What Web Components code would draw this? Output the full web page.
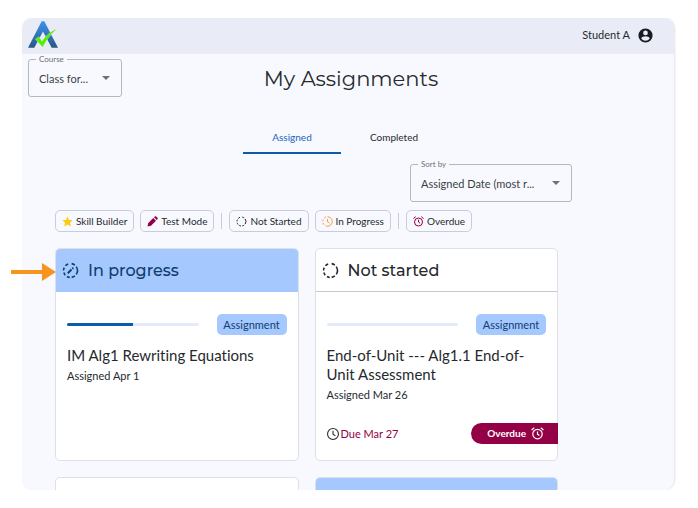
<!DOCTYPE html>
<html lang="en">
<head>
<meta charset="utf-8">
<meta name="viewport" content="width=device-width, initial-scale=1">
<title>My Assignments</title>
<style>
    html, body {
        height: 100%;
    }
    body {
        box-sizing: border-box;
        margin: 0;
        padding: 18px 24px 18px 22px;
        background: #fff;
        color: #262a2e;
        font-family: Lato, "Open Sans", sans-serif;
        font-variant-ligatures: none;
        --heading-font: Montserrat, Inter, "Open Sans", sans-serif;
        --blue: #0b5cab;
        --navy: #0f3e70;
        --sky: #a5c8ff;
        --berry: #930046;
        --line: #c9ccdc;
    }
</style>
</head>
<body>
<app-shell user="Student A">
    <page-heading>
        <outlined-select slot="start" label="Course" value="Class for..."></outlined-select>
        My Assignments
    </page-heading>
    <tab-bar tabs="Assigned,Completed"></tab-bar>
    <sort-row>
        <outlined-select label="Sort by" value="Assigned Date (most r..."></outlined-select>
    </sort-row>
    <filter-bar>
        <filter-chip icon="star">Skill Builder</filter-chip>
        <filter-chip icon="pencil">Test Mode</filter-chip>
        <hr>
        <filter-chip icon="dashed">Not Started</filter-chip>
        <filter-chip icon="clock-dashed">In Progress</filter-chip>
        <hr>
        <filter-chip icon="alarm">Overdue</filter-chip>
    </filter-bar>
    <card-grid>
        <assignment-card status="In progress" icon="progress" active pointer percent="50" kind="Assignment">
            IM Alg1 Rewriting Equations
            <span slot="assigned">Assigned Apr 1</span>
        </assignment-card>
        <assignment-card status="Not started" icon="dashed" percent="0" kind="Assignment" due="Due Mar 27" overdue>
            End-of-Unit --- Alg1.1 End-of-Unit Assessment
            <span slot="assigned">Assigned Mar 26</span>
        </assignment-card>
        <assignment-card></assignment-card>
        <assignment-card active></assignment-card>
    </card-grid>
</app-shell>

<script>
const DASHES = 'M9 3.500a9 9 0 0 0-3.600 2.400M3.900 8.200A9 9 0 0 0 3 12M3.400 14.600a9 9 0 0 0 1.800 3.400M7.500 19.800A9 9 0 0 0 11 21M13.500 20.900A9 9 0 0 0 17.600 19M19.400 17A9 9 0 0 0 19.400 7M17.600 5A9 9 0 0 0 13.500 3.100';
const ALARM = '<circle cx="12" cy="13" r="8"/><path d="M12 8.500V13l3.200 2.400M2 6l4.500-3.700M22 6l-4.500-3.700"/>';

const ICONS = {
    star: '<path fill="#ffc814" stroke="none" d="M12 2l3 6.800 7.500.7-5.700 5 1.700 7.300-6.500-3.900-6.500 3.900 1.700-7.300-5.700-5L9 8.800z"/>',
    pencil: '<path fill="#930046" stroke="none" d="M2 22l1.500-7L13.500 5l5.500 5.500L9 20.500zM15 3.500l1.500-1.500q1.500-1 3 0l2.500 2.500q1 1.500 0 3L20.500 9z"/>',
    dashed: `<path d="${DASHES}"/>`,
    'clock-dashed': `<g stroke="#f99a3c"><path d="M12 2.500a9.500 9.500 0 0 1 0 19"/><path stroke-dasharray="4 3.400" d="M12 21.500a9.500 9.500 0 0 1 0-19"/><path d="M12 7v5.500l4 2.500"/></g>`,
    alarm: `<g stroke="#930046">${ALARM}</g>`,
    'alarm-plain': ALARM,
    progress: `<path d="${DASHES}"/><path stroke-width="2.500" d="M8.500 15.500l4.800-4.800M14.300 9.700l1.300-1.300"/>`,
    clock: '<circle cx="12" cy="12" r="10"/><path d="M12 6v6.500l4.500 3"/>',
    user: '<path fill="currentColor" stroke="none" fill-rule="evenodd" d="M12 0a12 12 0 1 0 0 24 12 12 0 0 0 0-24zm0 3.600a4 4 0 1 1 0 8 4 4 0 0 1 0-8zm0 17.200a8.700 8.700 0 0 1-7.200-3.900c0-2.400 4.800-3.700 7.200-3.700s7.200 1.300 7.200 3.700A8.700 8.700 0 0 1 12 20.800z"/>',
};

function icon(name) {
    return `<svg class="icon" viewBox="1 1 22 22" overflow="visible" fill="none" stroke="currentColor" stroke-width="2" aria-hidden="true">${ICONS[name]}</svg>`;
}

class AppShell extends HTMLElement {
    constructor() {
        super();
        this.attachShadow({ mode: 'open' });
        this.shadowRoot.innerHTML = `
            <style>
                :host {
                    display: flex;
                    flex-direction: column;
                    height: 100%;
                    border-radius: 10px;
                    background: #f8f9ff;
                    box-shadow: 1px 0 2px #e2e3e8;
                    /* cut the cards at the bottom, leave room for the pointer on the left */
                    clip-path: inset(0 -4px 0 -20px);
                }
                header {
                    display: flex;
                    flex: none;
                    align-items: center;
                    justify-content: space-between;
                    height: 36px;
                    padding: 0 22px 0 6px;
                    border-radius: 10px 10px 0 0;
                    background: #e9ecf6;
                }
                .logo {
                    width: 30px;
                    height: 27px;
                    margin-bottom: 4px;
                }
                .user {
                    display: flex;
                    align-items: center;
                    gap: 9px;
                    font-size: 11px;
                    line-height: 16px;
                    margin-bottom: 2px;
                }
                .user .icon {
                    width: 13px;
                    height: 13px;
                    color: #171c22;
                }
                main {
                    flex: 1;
                    min-height: 0;
                }
            </style>
            <header>
                <svg class="logo" viewBox="84 60 90 80" role="img" aria-label="Logo">
                    <defs>
                        <linearGradient id="blue" x1="0" y1="0" x2="0" y2="1">
                            <stop offset="0" stop-color="#3d93f2"/>
                            <stop offset="1" stop-color="#285784"/>
                        </linearGradient>
                    </defs>
                    <path fill="url(#blue)" d="M125 60h8l41 80h-19l-26-49-26 49H84z"/>
                    <path fill="#53f000" stroke="#e9ecf6" stroke-width="1" d="M106 114l11-7 9 13q18-27 46-37-25 18-44 55z"/>
                </svg>
                <div class="user"><span>${this.getAttribute('user')}</span>${icon('user')}</div>
            </header>
            <main><slot></slot></main>
        `;
    }
}

class PageHeading extends HTMLElement {
    constructor() {
        super();
        this.attachShadow({ mode: 'open' });
        this.shadowRoot.innerHTML = `
            <style>
                :host {
                    display: grid;
                    grid-template-columns: 1fr auto 1fr;
                    align-items: center;
                    padding-left: 6px;
                }
                ::slotted([slot="start"]) {
                    width: 94px;
                }
                h1 {
                    margin: 0;
                    padding-top: 6px;
                    font: 400 21px/30px var(--heading-font);
                }
            </style>
            <slot name="start"></slot>
            <h1><slot></slot></h1>
        `;
    }
}

// Text field outline with the label set into its top border
class OutlinedSelect extends HTMLElement {
    constructor() {
        super();
        this.attachShadow({ mode: 'open' });
        this.shadowRoot.innerHTML = `
            <style>
                :host {
                    display: block;
                }
                fieldset {
                    position: relative;
                    box-sizing: border-box;
                    height: 43px;
                    min-width: 0;
                    margin: 0;
                    padding: 0;
                    border: 1px solid #b5b7bf;
                    border-radius: 3px;
                }
                legend {
                    margin-left: 7px;
                    padding: 0 3px;
                    color: #6c7077;
                    font-size: 8px;
                    line-height: 10px;
                }
                label {
                    display: block;
                }
                select {
                    display: block;
                    width: 100%;
                    height: 28px;
                    padding: 0 26px 0 10px;
                    border: 0;
                    background: none;
                    color: #3b3f45;
                    font: 11px Lato, sans-serif;
                    appearance: none;
                }
                svg {
                    position: absolute;
                    right: 11px;
                    top: 12px;
                    width: 8px;
                    height: 4px;
                    fill: #6c7077;
                    pointer-events: none;
                }
            </style>
            <fieldset>
                <legend><label for="field">${this.getAttribute('label')}</label></legend>
                <select id="field"><option>${this.getAttribute('value')}</option></select>
                <svg viewBox="0 0 8 4" aria-hidden="true"><path d="M0 0h8L4 4z"/></svg>
            </fieldset>
        `;
    }
}

class TabBar extends HTMLElement {
    constructor() {
        super();
        this.attachShadow({ mode: 'open' });
        const tabs = this.getAttribute('tabs').split(',');
        this.shadowRoot.innerHTML = `
            <style>
                :host {
                    display: flex;
                    justify-content: center;
                    gap: 4px;
                    margin-top: 25px;
                    padding-right: 10px;
                }
                button {
                    width: 98px;
                    height: 32px;
                    padding: 0;
                    border: 0;
                    border-bottom: 2px solid transparent;
                    background: none;
                    color: inherit;
                    font: 10px Lato, sans-serif;
                }
                button[aria-selected="true"] {
                    border-color: var(--blue);
                    color: #1566bd;
                }
            </style>
            ${tabs.map((tab, i) => `<button role="tab" aria-selected="${i === 0}">${tab}</button>`).join('')}
        `;
        this.setAttribute('role', 'tablist');
    }
}

class SortRow extends HTMLElement {
    constructor() {
        super();
        this.attachShadow({ mode: 'open' });
        this.shadowRoot.innerHTML = `
            <style>
                :host {
                    display: flex;
                    justify-content: flex-end;
                    margin-top: 5px;
                    padding-right: 102px;
                }
                ::slotted(*) {
                    width: 162px;
                }
            </style>
            <slot></slot>
        `;
    }
}

class FilterBar extends HTMLElement {
    constructor() {
        super();
        this.attachShadow({ mode: 'open' });
        this.shadowRoot.innerHTML = `
            <style>
                :host {
                    display: flex;
                    align-items: center;
                    gap: 6px;
                    margin-top: 8px;
                    padding-left: 33px;
                }
                ::slotted(hr) {
                    width: 1px;
                    height: 16px;
                    margin: 0 1px;
                    border: 0;
                    background: var(--line);
                }
            </style>
            <slot></slot>
        `;
    }
}

class FilterChip extends HTMLElement {
    constructor() {
        super();
        this.attachShadow({ mode: 'open' });
        this.shadowRoot.innerHTML = `
            <style>
                :host {
                    display: block;
                }
                button {
                    display: flex;
                    align-items: center;
                    gap: 3px;
                    height: 22px;
                    padding: 0 6px;
                    border: 1px solid var(--line);
                    border-radius: 5px;
                    background: none;
                    color: inherit;
                    font: 10px Lato, sans-serif;
                    white-space: nowrap;
                }
                .icon {
                    width: 11px;
                    height: 11px;
                }
            </style>
            <button type="button">${icon(this.getAttribute('icon'))}<slot></slot></button>
        `;
    }
}

class CardGrid extends HTMLElement {
    constructor() {
        super();
        this.attachShadow({ mode: 'open' });
        this.shadowRoot.innerHTML = `
            <style>
                :host {
                    display: grid;
                    grid-template-columns: 1fr 1fr;
                    gap: 16px;
                    margin-top: 16px;
                    padding: 0 116px 0 33px;
                }
            </style>
            <slot></slot>
        `;
    }
}

class AssignmentCard extends HTMLElement {
    constructor() {
        super();
        this.attachShadow({ mode: 'open' });
        const status = this.getAttribute('status');
        this.shadowRoot.innerHTML = `
            <style>
                :host {
                    display: block;
                    position: relative;
                    border: 1px solid #dfe0e6;
                    border-radius: 5px;
                    background: #fff;
                }
                h2 {
                    display: flex;
                    align-items: center;
                    gap: 9px;
                    box-sizing: border-box;
                    height: 43px;
                    margin: 0;
                    padding: 1px 6px 0;
                    border-bottom: 1px solid #c8c9cd;
                    border-radius: 4px 4px 0 0;
                    font: 500 16px/24px var(--heading-font);
                }
                h2 .icon {
                    width: 17px;
                    height: 17px;
                }
                :host([active]) h2 {
                    border-color: var(--sky);
                    background: var(--sky);
                    color: var(--navy);
                }
                .body {
                    padding: 22px 11px 16px;
                }
                .top, .due, .overdue, .when {
                    display: flex;
                    align-items: center;
                }
                .top {
                    gap: 18px;
                }
                .bar {
                    flex: 1;
                    height: 3px;
                    border-radius: 2px;
                    background: #e3ebf8;
                    overflow: hidden;
                }
                .fill {
                    height: 100%;
                    background: var(--blue);
                }
                .kind {
                    width: 70px;
                    border-radius: 5px;
                    background: var(--sky);
                    color: var(--navy);
                    font-size: 11px;
                    line-height: 21px;
                    text-align: center;
                }
                h3 {
                    margin: 11px 0 0;
                    font-size: 15px;
                    font-weight: 400;
                    line-height: 19px;
                }
                .assigned {
                    margin-top: 3px;
                    font-size: 11px;
                    line-height: 16px;
                }
                .due {
                    justify-content: space-between;
                    margin: 20px -11px 0 0;
                    font-size: 11px;
                    line-height: 21px;
                }
                .when {
                    gap: 2px;
                    color: var(--berry);
                }
                .when .icon {
                    width: 12px;
                    height: 12px;
                    color: #262a2e;
                }
                .overdue {
                    gap: 5px;
                    margin-right: -1px;
                    padding: 0 14px 0 16px;
                    border-radius: 11px 0 0 11px;
                    background: var(--berry);
                    color: #fff;
                    font-size: 10px;
                    font-weight: 700;
                }
                .overdue .icon {
                    width: 13px;
                    height: 13px;
                }
                .pointer {
                    position: absolute;
                    right: 100%;
                    top: 14px;
                    width: 45px;
                    height: 18px;
                    fill: #f7941d;
                }
            </style>
            <h2>${status ? `${icon(this.getAttribute('icon'))}<span>${status}</span>` : ''}</h2>
            ${status ? this.body() : ''}
        `;
    }

    body() {
        const percent = this.getAttribute('percent');
        const due = this.getAttribute('due');
        return `
            <div class="body">
                <div class="top">
                    <div class="bar" role="progressbar" aria-valuenow="${percent}" aria-label="Progress"><div class="fill" style="width: ${percent}%"></div></div>
                    <span class="kind">${this.getAttribute('kind')}</span>
                </div>
                <h3><slot></slot></h3>
                <div class="assigned"><slot name="assigned"></slot></div>
                ${due ? `<div class="due">
                    <span class="when">${icon('clock')}<span>${due}</span></span>
                    ${this.hasAttribute('overdue') ? `<span class="overdue"><span>Overdue</span>${icon('alarm-plain')}</span>` : ''}
                </div>` : ''}
            </div>
            ${this.hasAttribute('pointer') ? '<svg class="pointer" viewBox="0 0 45 18" aria-hidden="true"><path d="M0 7h31V0l14 9-14 9v-7H0z"/></svg>' : ''}
        `;
    }
}

customElements.define('app-shell', AppShell);
customElements.define('page-heading', PageHeading);
customElements.define('outlined-select', OutlinedSelect);
customElements.define('tab-bar', TabBar);
customElements.define('sort-row', SortRow);
customElements.define('filter-bar', FilterBar);
customElements.define('filter-chip', FilterChip);
customElements.define('card-grid', CardGrid);
customElements.define('assignment-card', AssignmentCard);
</script>
</body>
</html>
